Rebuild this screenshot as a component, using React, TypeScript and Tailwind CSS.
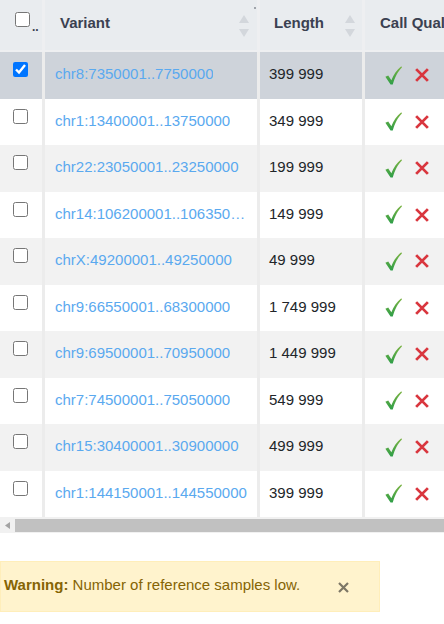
import React from 'react';

interface VariantRow {
  id: number;
  variant: string;
  length: string;
  selected?: boolean;
}

const rows: VariantRow[] = [
  { id: 1, variant: 'chr8:7350001..7750000', length: '399 999', selected: true },
  { id: 2, variant: 'chr1:13400001..13750000', length: '349 999' },
  { id: 3, variant: 'chr22:23050001..23250000', length: '199 999' },
  { id: 4, variant: 'chr14:106200001..106350000', length: '149 999' },
  { id: 5, variant: 'chrX:49200001..49250000', length: '49 999' },
  { id: 6, variant: 'chr9:66550001..68300000', length: '1 749 999' },
  { id: 7, variant: 'chr9:69500001..70950000', length: '1 449 999' },
  { id: 8, variant: 'chr7:74500001..75050000', length: '549 999' },
  { id: 9, variant: 'chr15:30400001..30900000', length: '499 999' },
  { id: 10, variant: 'chr1:144150001..144550000', length: '399 999' },
];

const SortIcon = () => (
  <svg width="10" height="28" viewBox="0 0 10 28" className="shrink-0">
    <path d="M5 4 L10 12 L0 12 Z" fill="#d3d7dc" />
    <path d="M5 26 L10 18 L0 18 Z" fill="#d3d7dc" />
  </svg>
);

const Check = () => (
  <svg width="17" height="19" viewBox="0 0 16 18">
    <defs>
      <linearGradient id="g" x1="0" y1="0" x2="0" y2="1">
        <stop offset="0" stopColor="#7cb342" />
        <stop offset="1" stopColor="#2e9e48" />
      </linearGradient>
    </defs>
    <path
      d="M0.3 10.3 L3 8.9 L6 13.6 C8 8.2 11 3.8 15.4 0.3 L16 1.4 C12.2 5 9.5 10 7.3 17.6 L5.2 17.6 Z"
      fill="url(#g)"
    />
  </svg>
);

const Cross = () => (
  <svg width="16" height="16" viewBox="0 0 15 15">
    <path d="M2 2 L13 13 M13 2 L2 13" stroke="#d9363e" strokeWidth="2.6" strokeLinecap="butt" />
  </svg>
);

const App: React.FC = () => {
  return (
    <div className="w-[444px] h-[624px] bg-white overflow-hidden text-[15px] font-['Liberation_Sans',Arial,sans-serif]">
      <div className="w-[444px] overflow-hidden">
        <div className="w-[525px]">
          {/* header */}
          <div className="flex h-[52px] bg-[#e9ecef] border-b-2 border-[#eeeff1] text-[#3b4151] font-bold">
            <div className="w-[45px] shrink-0 border-r-[3px] border-[#eeeff1] flex items-start pt-[12px] pl-[15px]">
              <input type="checkbox" className="w-[15px] h-[15px] m-0 shrink-0" readOnly />
              <span className="text-[#3b4151] text-[12px] leading-none mt-[9px] ml-[2px] font-bold">..</span>
            </div>
            <div className="w-[215px] shrink-0 border-r-[3px] border-[#eeeff1] flex items-center pl-[15px] pr-[8px] relative">
              <span className="flex-1 pb-[4px]">Variant</span>
              <SortIcon />
              <div className="absolute right-[1px] top-[7px] w-[2px] h-[2px] bg-[#a0a4aa]" />
            </div>
            <div className="w-[105px] shrink-0 border-r-[3px] border-[#eeeff1] flex items-center pl-[14px] pr-[7px]">
              <span className="flex-1 pb-[4px]">Length</span>
              <SortIcon />
            </div>
            <div className="w-[160px] shrink-0 flex items-center pl-[15px]">
              <span className="pb-[4px] whitespace-nowrap">Call Quality</span>
            </div>
          </div>

          {/* body */}
          {rows.map((row, i) => (
            <div
              key={row.id}
              className={
                row.selected
                  ? 'flex h-[46.5px] bg-[#ced3da]'
                  : i % 2 === 0
                  ? 'flex h-[46.5px] bg-[#f2f2f2]'
                  : 'flex h-[46.5px] bg-white'
              }
            >
              <div className="w-[45px] shrink-0 border-r-[3px] border-[#ececec] flex items-start pt-[10px] pl-[13px]">
                <input
                  type="checkbox"
                  checked={!!row.selected}
                  readOnly
                  className="w-[15px] h-[15px] m-0"
                />
              </div>
              <div className="w-[215px] shrink-0 border-r-[3px] border-[#ececec] flex items-center pl-[10px] pr-[10px] min-w-0">
                <span className="truncate text-[#5aa9ef] pb-[2px]">{row.variant}</span>
              </div>
              <div className="w-[105px] shrink-0 border-r-[3px] border-[#ececec] flex items-center pl-[9px]">
                <span className="text-[#212529] pb-[2px]">{row.length}</span>
              </div>
              <div className="w-[160px] shrink-0 flex items-center pl-[20px] gap-[12px]">
                <Check />
                <Cross />
              </div>
            </div>
          ))}
        </div>
      </div>

      {/* horizontal scrollbar */}
      <div className="h-[16px] bg-[#f1f1f1] flex items-center">
        <div className="w-[15px] h-full flex items-center justify-center">
          <svg width="5" height="7" viewBox="0 0 5 7">
            <path d="M5 0 L0 3.5 L5 7 Z" fill="#a3a3a3" />
          </svg>
        </div>
        <div className="flex-1 h-[13px] bg-[#c1c1c1]" />
      </div>

      {/* warning */}
      <div className="mt-[28px] w-[380px] h-[51px] bg-[#fff3cd] border border-[#ffeeba] flex items-center pl-[3px] pr-[30px] text-[#856404]">
        <span className="flex-1 pb-[2px]">
          <strong className="font-bold">Warning:</strong> Number of reference samples low.
        </span>
        <svg width="11" height="11" viewBox="0 0 11 11" className="mt-[1px]">
          <path d="M1 1 L10 10 M10 1 L1 10" stroke="#7d7766" strokeWidth="2.2" />
        </svg>
      </div>
    </div>
  );
};

export default App;
